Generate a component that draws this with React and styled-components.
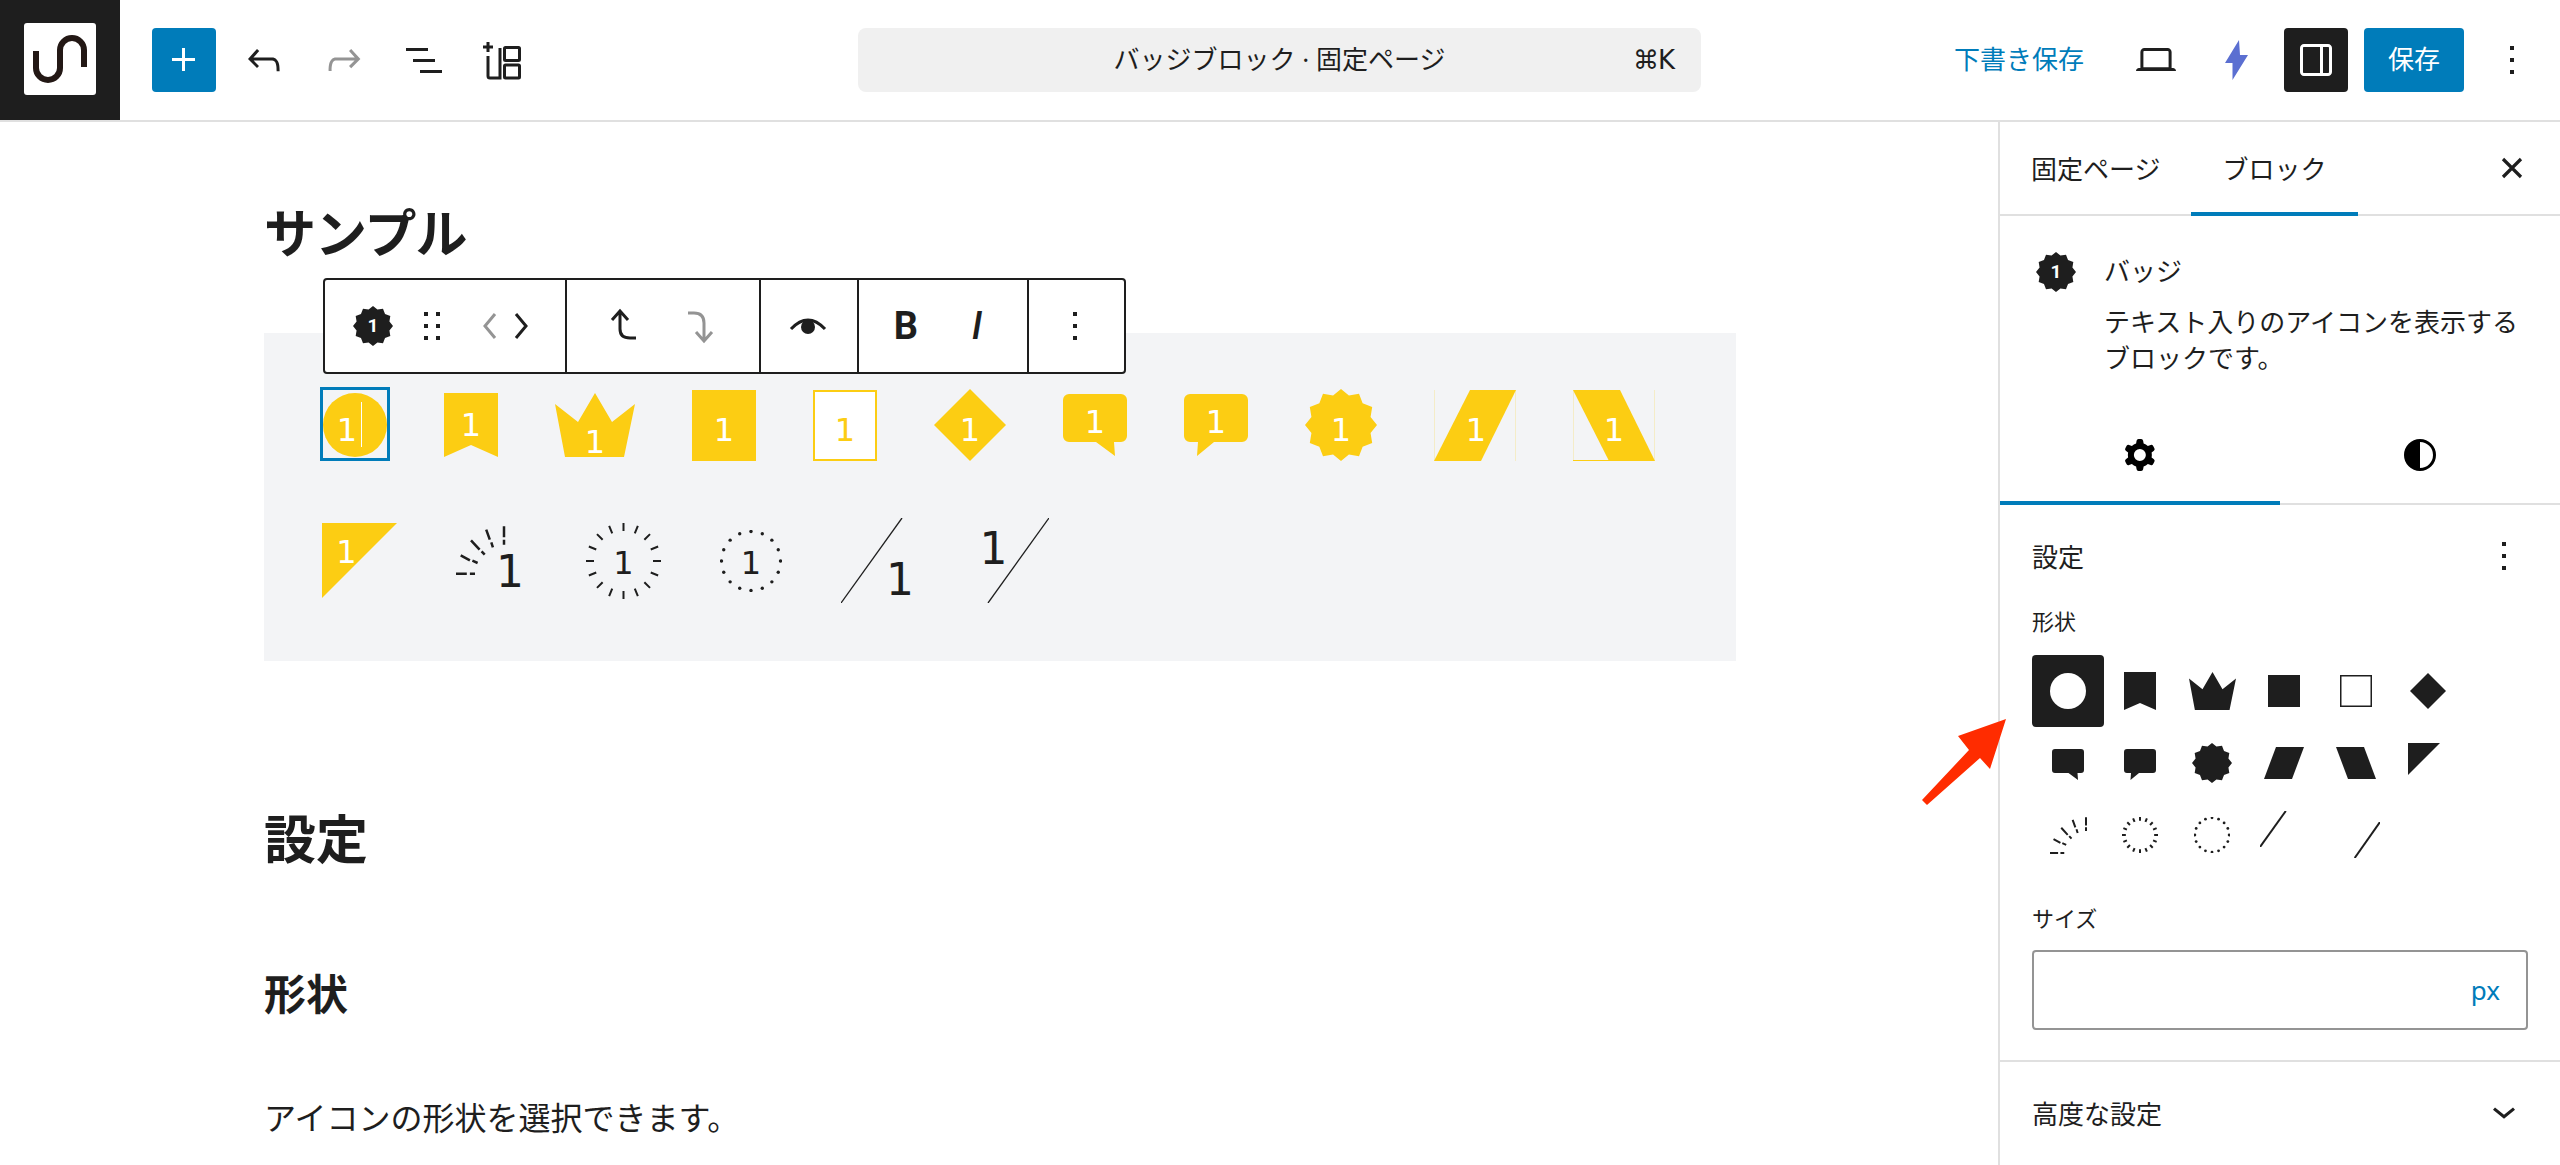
import styled, { createGlobalStyle } from "styled-components";

const DARK = "#1e1e1e";
const BLUE = "#007cba";
const LINE = "#e0e0e0";
const YELLOW = "#fccd13";
const GREY = "#949494";

const GlobalStyle = createGlobalStyle`
    html, body {
        margin: 0;
        height: 100%;
        overflow: hidden;
        background: #fff;
    }

    body {
        color: ${DARK};
        font-family: "Noto Sans CJK JP", "Noto Sans", "DejaVu Sans", sans-serif;
        font-size: 26px;
    }

    * {
        box-sizing: border-box;
    }
`;

function burstPoints(size, tips = 12, inner = 0.85) {
    const r = size / 2;
    const points = [];
    for (let i = 0; i < tips * 2; i++) {
        const radius = i % 2 === 0 ? r : r * inner;
        const angle = (Math.PI * i) / tips - Math.PI / 2;
        points.push(`${(r + radius * Math.cos(angle)).toFixed(2)},${(r + radius * Math.sin(angle)).toFixed(2)}`);
    }
    return points.join(" ");
}

function radialTicks(w, h) {
    const cx = w / 2;
    const cy = h / 2;
    let d = "";
    for (let i = 0; i < 16; i++) {
        const angle = (Math.PI * i) / 8;
        const x1 = cx + (cx - 8) * Math.cos(angle);
        const y1 = cy + (cy - 8) * Math.sin(angle);
        const x2 = cx + cx * Math.cos(angle);
        const y2 = cy + cy * Math.sin(angle);
        d += `M${x1.toFixed(2)} ${y1.toFixed(2)}L${x2.toFixed(2)} ${y2.toFixed(2)}`;
    }
    return d;
}

const DOTS = Array.from({ length: 16 }, (_, i) => {
    const angle = (Math.PI * i) / 8;
    return [31 + 29.5 * Math.cos(angle), 31 + 29.5 * Math.sin(angle)];
});

const SUN_RAYS =
    "M48 .3V11.3M48 13.7V18.7M30.2 3.7L33.8 13.7M35.3 16.3L36.9 21.3M15 14.3L23.6 23.7M25.6 25.3L28.7 28.7M4.7 29.3L13.9 34.3M16.4 34.7L21.6 37M0 47.7H10.8M13.9 47.7H19";

// natural size (the yellow badge) and drawing of every shape
const SHAPES = {
    circle: { w: 64, h: 64, draw: (c) => <circle cx="32" cy="32" r="32" fill={c} /> },
    bookmark: { w: 54, h: 64, draw: (c) => <polygon points="0,0 54,0 54,64 27,52 0,64" fill={c} /> },
    crown: { w: 80, h: 64, draw: (c) => <polygon points="0,11 23,29 40,0 57,29 80,11 69,64 10,64" fill={c} /> },
    square: { w: 64, h: 71, draw: (c) => <rect width="64" height="71" fill={c} /> },
    outline: {
        w: 64,
        h: 71,
        draw: (c) => <rect x="1" y="1" width="62" height="69" fill="#fff" stroke={c} strokeWidth="2" vectorEffect="non-scaling-stroke" />,
    },
    diamond: { w: 72, h: 72, draw: (c) => <polygon points="36,0 72,36 36,72 0,36" fill={c} /> },
    speechRight: {
        w: 64,
        h: 62,
        draw: (c) => <path d="M6 0H58a6 6 0 0 1 6 6V42a6 6 0 0 1-6 6H51L52 62L33 48H6a6 6 0 0 1-6-6V6a6 6 0 0 1 6-6Z" fill={c} />,
    },
    speechLeft: {
        w: 64,
        h: 62,
        draw: (c) => <path d="M6 0H58a6 6 0 0 1 6 6V42a6 6 0 0 1-6 6H30L13 62L14 48H6a6 6 0 0 1-6-6V6a6 6 0 0 1 6-6Z" fill={c} />,
    },
    burst: { w: 72, h: 72, draw: (c) => <polygon points={burstPoints(72)} fill={c} /> },
    slantRight: {
        w: 82,
        h: 71,
        draw: (c) => (
            <>
                <polygon points="36,0 82,0 47,71 0,71" fill={c} />
                <path d="M.5 0V71M81.5 0V71" stroke={c} strokeOpacity=".2" />
            </>
        ),
    },
    slantLeft: {
        w: 82,
        h: 71,
        draw: (c) => (
            <>
                <polygon points="0,0 47,0 82,71 36,71" fill={c} />
                <path d="M.5 0V71M81.5 0V71" stroke={c} strokeOpacity=".2" />
                <path d="M0 70.5H36" stroke={c} />
            </>
        ),
    },
    tileSlantRight: { w: 40, h: 32, draw: (c) => <polygon points="12,0 40,0 28,32 0,32" fill={c} /> },
    tileSlantLeft: { w: 40, h: 32, draw: (c) => <polygon points="0,0 28,0 40,32 12,32" fill={c} /> },
    triangle: { w: 75, h: 75, draw: (c) => <polygon points="0,0 75,0 0,75" fill={c} /> },
    sun: {
        w: 64,
        h: 69,
        draw: (c, stroke = 2.5) => <path d={SUN_RAYS} stroke={c} strokeWidth={stroke} vectorEffect="non-scaling-stroke" fill="none" />,
    },
    ticks: {
        w: 75,
        h: 76,
        draw: (c, stroke = 2) => <path d={radialTicks(75, 76)} stroke={c} strokeWidth={stroke} vectorEffect="non-scaling-stroke" fill="none" />,
    },
    dots: {
        w: 62,
        h: 62,
        draw: (c, stroke = 1.7) => (
            <>
                {DOTS.map(([x, y], i) => (
                    <circle key={i} cx={x} cy={y} r={stroke} fill={c} />
                ))}
            </>
        ),
    },
    lineBottom: {
        w: 78,
        h: 85,
        draw: (c, stroke = 1.3) => <path d="M0 85L61 0" stroke={c} strokeWidth={stroke} vectorEffect="non-scaling-stroke" fill="none" />,
    },
    lineTop: {
        w: 65,
        h: 85,
        draw: (c, stroke = 1.3) => <path d="M4 85L65 0" stroke={c} strokeWidth={stroke} vectorEffect="non-scaling-stroke" fill="none" />,
    },
};

function Shape({ name, color, width, height, stroke }) {
    const shape = SHAPES[name];
    return (
        <svg width={width ?? shape.w} height={height ?? shape.h} viewBox={`0 0 ${shape.w} ${shape.h}`} preserveAspectRatio="none">
            {shape.draw(color, stroke)}
        </svg>
    );
}

function WpIcon({ d, size = 48, color = "currentColor", evenOdd }) {
    return (
        <IconSvg width={size} height={size} viewBox="0 0 24 24" fill={color}>
            <path d={d} fillRule={evenOdd ? "evenodd" : undefined} clipRule={evenOdd ? "evenodd" : undefined} />
        </IconSvg>
    );
}

const ICONS = {
    plus: "M11 12.5V17.5H12.5V12.5H17.5V11H12.5V6H11V11H6V12.5H11Z",
    undo: "M18.3 11.7c-.6-.6-1.4-.9-2.3-.9H6.7l2.9-3.3-1.1-1-4.5 5L8.5 16l1-1-2.7-2.7H16c.5 0 .9.2 1.3.5 1 1 1 3.4 1 4.5v.3h1.5v-.2c0-1.5 0-4.3-1.5-5.7z",
    redo: "M15.6 6.5l-1.1 1 2.9 3.3H8c-.9 0-1.7.3-2.3.9-1.4 1.5-1.4 4.2-1.4 5.6v.2h1.5v-.3c0-1.1 0-3.5 1-4.5.3-.3.7-.5 1.3-.5h9.2L14.5 15l1.1 1.1 4.6-4.6-4.6-5z",
    list: "M3 6h11v1.5H3V6zm3.5 5.5h11V13h-11v-1.5zM21 17H10v1.5h11V17z",
    more: "M13 19h-2v-2h2v2zm0-6h-2v-2h2v2zm0-6h-2V5h2v2z",
    laptop: "M20.5 16h-.7V8c0-1.1-.9-2-2-2H6.2c-1.1 0-2 .9-2 2v8h-.7c-.8 0-1.5.7-1.5 1.5h20c0-.8-.7-1.5-1.5-1.5zM5.7 8c0-.3.2-.5.5-.5h11.6c.3 0 .5.2.5.5v7.6H5.7V8z",
    drawer: "M18 4H6c-1.1 0-2 .9-2 2v12c0 1.1.9 2 2 2h12c1.1 0 2-.9 2-2V6c0-1.1-.9-2-2-2zm-4 14.5H6c-.3 0-.5-.2-.5-.5V6c0-.3.2-.5.5-.5h8v13zm4.5-.5c0 .3-.2.5-.5.5h-2.5v-13H18c.3 0 .5.2.5.5v12z",
    drag: "M8 7h2V5H8v2zm0 6h2v-2H8v2zm0 6h2v-2H8v2zm6-14v2h2V5h-2zm0 8h2v-2h-2v2zm0 6h2v-2h-2v2z",
    chevronDown: "M17.5 10.9L12 15.4 6.5 10.9l1-1.2L12 13.4l4.5-3.7 1 1.2z",
    cog: "M10.289 4.836A1 1 0 0111.275 4h1.306a1 1 0 01.987.836l.244 1.466c.787.26 1.503.679 2.108 1.218l1.393-.522a1 1 0 011.216.437l.653 1.13a1 1 0 01-.23 1.273l-1.148.944a6.025 6.025 0 010 2.435l1.149.946a1 1 0 01.23 1.272l-.653 1.13a1 1 0 01-1.216.437l-1.394-.522c-.605.54-1.32.958-2.108 1.218l-.244 1.466a1 1 0 01-.987.836h-1.306a1 1 0 01-.986-.836l-.244-1.466a5.995 5.995 0 01-2.108-1.218l-1.394.522a1 1 0 01-1.217-.436l-.653-1.131a1 1 0 01.23-1.272l1.149-.946a6.026 6.026 0 010-2.435l-1.148-.944a1 1 0 01-.23-1.272l.653-1.131a1 1 0 011.217-.437l1.393.522a5.994 5.994 0 012.108-1.218l.244-1.466zM14.929 12a3 3 0 11-6 0 3 3 0 016 0z",
};

function Logo() {
    return (
        <svg width="120" height="120" viewBox="0 0 120 120">
            <rect x="24" y="23" width="72" height="72" rx="3" fill="#fff" />
            <path d="M36 51V68a12 12 0 0 0 24 0V50a12 12 0 0 1 24 0V67" fill="none" stroke="#231815" strokeWidth="6" />
        </svg>
    );
}

function BlockInserterIcon() {
    return (
        <svg width="48" height="48" viewBox="0 0 48 48" fill="none" stroke={DARK} strokeWidth="3">
            <path d="M5 11H15M10 6V16" />
            <path d="M10 20V40a2 2 0 0 0 2 2H22V12" />
            <rect x="26.5" y="11.5" width="15" height="13" rx="1" />
            <rect x="26.5" y="29" width="15" height="13" rx="1" />
        </svg>
    );
}

function BoltIcon() {
    return (
        <svg width="23" height="40" viewBox="0 0 23 40">
            <polygon points="14,0 0,23 7.5,23 7.5,40 23,15 15,15" fill="#5b6fd1" />
        </svg>
    );
}

function CloseIcon() {
    return (
        <svg width="48" height="48" viewBox="0 0 48 48" fill="none" stroke={DARK} strokeWidth="3.2">
            <path d="M15 15L33 33M33 15L15 33" />
        </svg>
    );
}

function ChevronIcon({ left, color }) {
    return (
        <svg width="30" height="48" viewBox="0 0 30 48" fill="none" stroke={color} strokeWidth="3">
            <path d={left ? "M20 12L10 24L20 36" : "M10 12L20 24L10 36"} />
        </svg>
    );
}

function MoveUpIcon() {
    return (
        <svg width="48" height="48" viewBox="0 0 48 48" fill="none" stroke={DARK} strokeWidth="3">
            <path d="M12 18L20 9L28 18M20 9V27Q20 36 30 36H36" />
        </svg>
    );
}

function MoveDownIcon() {
    return (
        <svg width="48" height="48" viewBox="0 0 48 48" fill="none" stroke={GREY} strokeWidth="3">
            <path d="M12 11H18Q28 11 28 21V39M20 30L28 39L36 30" />
        </svg>
    );
}

function EyeIcon() {
    return (
        <svg width="48" height="48" viewBox="0 0 48 48">
            <path d="M7 27Q24 9 41 27" fill="none" stroke={DARK} strokeWidth="3" />
            <circle cx="24" cy="25" r="7" fill={DARK} />
        </svg>
    );
}

function ContrastIcon() {
    return (
        <svg width="48" height="48" viewBox="0 0 48 48">
            <circle cx="24" cy="24" r="14.5" fill="#fff" stroke="#000" strokeWidth="3" />
            <path d="M24 9.5a14.5 14.5 0 0 0 0 29Z" fill="#000" />
        </svg>
    );
}

function ArrowMark() {
    return (
        <ArrowLayer width="100" height="100" viewBox="1915 712 100 100">
            <polygon points="2006,719 1990,769 1980,758 1927,805 1922,800 1969,750 1958,736" fill="#ff2c00" />
        </ArrowLayer>
    );
}

function BlackBadge() {
    return (
        <BlackBadgeBox>
            <Shape name="burst" color={DARK} width={40} height={40} />
            <BlackDigit>1</BlackDigit>
        </BlackBadgeBox>
    );
}

const ROW_ONE = [
    { shape: "circle", dx: -8, dy: 5, selected: true },
    { shape: "bookmark", dy: 0 },
    { shape: "crown", dy: 17 },
    { shape: "square", dy: 5 },
    { shape: "outline", dy: 5, yellow: true },
    { shape: "diamond", dy: 5 },
    { shape: "speechRight", dy: -3 },
    { shape: "speechLeft", dy: -3 },
    { shape: "burst", dy: 5 },
    { shape: "slantRight", dy: 5, dx: 1 },
    { shape: "slantLeft", dy: 5 },
];

const ROW_TWO = [
    { shape: "triangle", dx: -13, dy: -9, ml: -1 },
    { shape: "sun", dx: 22, dy: 11, dark: true, big: true },
    { shape: "ticks", dy: 2, dark: true, ml: 7 },
    { shape: "dots", dy: 2, dark: true },
    { shape: "lineBottom", dx: 20, dy: 19, dark: true, big: true },
    { shape: "lineTop", dx: -23, dy: -12, dark: true, big: true, ml: 6 },
];

const TILES = [
    { shape: "circle", w: 36, h: 36, selected: true },
    { shape: "bookmark", w: 32, h: 38 },
    { shape: "crown", w: 47, h: 38 },
    { shape: "square", w: 32, h: 32 },
    { shape: "outline", w: 32, h: 32 },
    { shape: "diamond", w: 36, h: 36 },
    { shape: "speechRight", w: 32, h: 31, dy: 1 },
    { shape: "speechLeft", w: 32, h: 31, dy: 1 },
    { shape: "burst", w: 40, h: 40 },
    { shape: "tileSlantRight", w: 40, h: 32 },
    { shape: "tileSlantLeft", w: 40, h: 32 },
    { shape: "triangle", w: 32, h: 32, dx: -4, dy: -4 },
    { shape: "sun", w: 48, h: 52, dx: 6, dy: 8, stroke: 2 },
    { shape: "ticks", w: 36, h: 36, stroke: 2 },
    { shape: "dots", w: 36, h: 36, stroke: 2.4 },
    { shape: "lineBottom", w: 33, h: 36, dx: -8, dy: -6, stroke: 2 },
    { shape: "lineTop", w: 27, h: 36, dx: 10, dy: 5, stroke: 2 },
];

function SampleBadge({ item }) {
    const natural = SHAPES[item.shape];
    const color = item.dark ? DARK : YELLOW;
    return (
        <Badge $w={natural.w} $h={natural.h} $ml={item.ml ?? 0} $selected={item.selected}>
            <Shape name={item.shape} color={color} />
            <Digit $dx={item.dx ?? 0} $dy={item.dy ?? 0} $big={item.big} $color={item.dark ? DARK : item.yellow ? YELLOW : "#fff"}>
                1
            </Digit>
            {item.selected && <Caret />}
        </Badge>
    );
}

export default function App() {
    return (
        <Page>
            <GlobalStyle />
            <Header>
                <HeaderLeft>
                    <LogoBox>
                        <Logo />
                    </LogoBox>
                    <InserterButton>
                        <WpIcon d={ICONS.plus} color="#fff" />
                    </InserterButton>
                    <IconButton>
                        <WpIcon d={ICONS.undo} />
                    </IconButton>
                    <IconButton $muted>
                        <WpIcon d={ICONS.redo} />
                    </IconButton>
                    <IconButton>
                        <WpIcon d={ICONS.list} />
                    </IconButton>
                    <IconButton $ml={-2}>
                        <BlockInserterIcon />
                    </IconButton>
                </HeaderLeft>
                <CommandBar>
                    <span />
                    <CommandTitle>バッジブロック · 固定ページ</CommandTitle>
                    <Shortcut>⌘K</Shortcut>
                </CommandBar>
                <HeaderRight>
                    <DraftLink>下書き保存</DraftLink>
                    <IconButton $ml={48}>
                        <WpIcon d={ICONS.laptop} />
                    </IconButton>
                    <IconButton $ml={32}>
                        <BoltIcon />
                    </IconButton>
                    <SidebarToggle $ml={24}>
                        <WpIcon d={ICONS.drawer} color="#fff" />
                    </SidebarToggle>
                    <SaveButton>保存</SaveButton>
                    <IconButton $ml={24}>
                        <WpIcon d={ICONS.more} />
                    </IconButton>
                </HeaderRight>
            </Header>

            <Main>
                <Editor>
                    <PageHeading $top={0} $tight>
                        サンプル
                    </PageHeading>
                    <Group>
                        <BlockToolbar>
                            <ToolSection $w={242} $pad={24}>
                                <ToolIcon $w={48}>
                                    <BlackBadge />
                                </ToolIcon>
                                <ToolIcon $w={48} $ml={11}>
                                    <WpIcon d={ICONS.drag} />
                                </ToolIcon>
                                <ToolIcon $w={30} $ml={19}>
                                    <ChevronIcon left color={GREY} />
                                </ToolIcon>
                                <ToolIcon $w={30} $ml={1}>
                                    <ChevronIcon color={DARK} />
                                </ToolIcon>
                            </ToolSection>
                            <ToolSection $w={194} $pad={33}>
                                <ToolIcon $w={48}>
                                    <MoveUpIcon />
                                </ToolIcon>
                                <ToolIcon $w={48} $ml={28}>
                                    <MoveDownIcon />
                                </ToolIcon>
                            </ToolSection>
                            <ToolSection $w={98} $pad={23}>
                                <ToolIcon $w={48}>
                                    <EyeIcon />
                                </ToolIcon>
                            </ToolSection>
                            <ToolSection $w={170} $pad={23}>
                                <FormatLetter>B</FormatLetter>
                                <FormatLetter $italic $ml={23}>
                                    I
                                </FormatLetter>
                            </ToolSection>
                            <ToolSection $last $pad={22}>
                                <ToolIcon $w={48}>
                                    <WpIcon d={ICONS.more} />
                                </ToolIcon>
                            </ToolSection>
                        </BlockToolbar>
                        <BadgeRow $gap={57} $h={74}>
                            {ROW_ONE.map((item) => (
                                <SampleBadge key={item.shape} item={item} />
                            ))}
                        </BadgeRow>
                        <BadgeRow $gap={59} $h={85} $top={56}>
                            {ROW_TWO.map((item) => (
                                <SampleBadge key={item.shape} item={item} />
                            ))}
                        </BadgeRow>
                    </Group>
                    <PageHeading $top={140}>設定</PageHeading>
                    <SubHeading>形状</SubHeading>
                    <Paragraph>アイコンの形状を選択できます。</Paragraph>
                </Editor>

                <Sidebar>
                    <SidebarTabs>
                        <SidebarTab>固定ページ</SidebarTab>
                        <SidebarTab $active>ブロック</SidebarTab>
                        <CloseButton>
                            <CloseIcon />
                        </CloseButton>
                    </SidebarTabs>

                    <BlockCard>
                        <CardIcon>
                            <BlackBadge />
                        </CardIcon>
                        <CardBody>
                            <CardTitle>バッジ</CardTitle>
                            <CardText>テキスト入りのアイコンを表示するブロックです。</CardText>
                        </CardBody>
                    </BlockCard>

                    <InspectorTabs>
                        <InspectorTab $active>
                            <WpIcon d={ICONS.cog} color="#000" evenOdd />
                        </InspectorTab>
                        <InspectorTab>
                            <ContrastIcon />
                        </InspectorTab>
                    </InspectorTabs>

                    <Panel>
                        <PanelHead>
                            <span>設定</span>
                            <IconButton>
                                <WpIcon d={ICONS.more} />
                            </IconButton>
                        </PanelHead>
                        <FieldLabel $top={31} $after={19}>
                            形状
                        </FieldLabel>
                        <TileGrid>
                            {TILES.map((tile) => (
                                <Tile key={tile.shape} $selected={tile.selected} $dx={tile.dx ?? 0} $dy={tile.dy ?? 0}>
                                    <Shape name={tile.shape} color={tile.selected ? "#fff" : DARK} width={tile.w} height={tile.h} stroke={tile.stroke} />
                                </Tile>
                            ))}
                        </TileGrid>
                        <FieldLabel $top={30}>サイズ</FieldLabel>
                        <SizeInput>
                            <Unit>px</Unit>
                        </SizeInput>
                    </Panel>

                    <AdvancedRow>
                        <span>高度な設定</span>
                        <WpIcon d={ICONS.chevronDown} />
                    </AdvancedRow>
                </Sidebar>
            </Main>
            <ArrowMark />
        </Page>
    );
}

const IconSvg = styled.svg`
    flex: none;
`;

const Page = styled.div`
    position: relative;
    width: 2560px;
    height: 1165px;
    overflow: hidden;
`;

const Header = styled.header`
    display: grid;
    grid-template-columns: 858px 843px 1fr;
    align-items: center;
    height: 122px;
    border-bottom: 2px solid ${LINE};
`;

const HeaderLeft = styled.div`
    display: flex;
    align-items: center;
    gap: 32px;
`;

const LogoBox = styled.div`
    display: flex;
    width: 120px;
    height: 120px;
    background: ${DARK};
`;

const InserterButton = styled.div`
    display: flex;
    align-items: center;
    justify-content: center;
    width: 64px;
    height: 64px;
    border-radius: 4px;
    background: ${BLUE};
    margin-right: -8px;
`;

const IconButton = styled.div`
    display: flex;
    align-items: center;
    justify-content: center;
    width: 48px;
    height: 48px;
    margin-left: ${(p) => p.$ml ?? 0}px;
    color: ${(p) => (p.$muted ? GREY : DARK)};
`;

const CommandBar = styled.div`
    display: grid;
    grid-template-columns: 1fr auto 1fr;
    align-items: center;
    height: 64px;
    padding: 0 27px;
    border-radius: 8px;
    background: #f0f0f0;
`;

const CommandTitle = styled.span`
    font-family: "Noto Sans", "Noto Sans CJK JP", sans-serif;
    font-size: 26px;
    line-height: 36px;
    padding-bottom: 2px;
`;

const Shortcut = styled.span`
    justify-self: end;
    font-size: 26px;
    font-family: "DejaVu Sans", "Noto Sans", sans-serif;
    letter-spacing: -1px;
`;

const HeaderRight = styled.div`
    display: flex;
    align-items: center;
    justify-content: flex-end;
    padding-right: 24px;
`;

const DraftLink = styled.span`
    color: ${BLUE};
    font-size: 26px;
    padding-bottom: 5px;
`;

const SidebarToggle = styled.div`
    display: flex;
    align-items: center;
    justify-content: center;
    width: 64px;
    height: 64px;
    margin-left: ${(p) => p.$ml}px;
    border-radius: 4px;
    background: ${DARK};
`;

const SaveButton = styled.div`
    display: flex;
    align-items: center;
    justify-content: center;
    width: 100px;
    height: 64px;
    margin-left: 16px;
    padding-bottom: 5px;
    border-radius: 4px;
    background: ${BLUE};
    color: #fff;
    font-size: 26px;
`;

const Main = styled.div`
    display: flex;
    height: 1043px;
`;

const Editor = styled.main`
    flex: 1;
    padding: 73px 0 0 264px;
    overflow: hidden;
`;

const PageHeading = styled.h1`
    margin: ${(p) => p.$top}px 0 0;
    font-size: 52px;
    line-height: 72px;
    font-weight: 700;
    letter-spacing: ${(p) => (p.$tight ? "-1px" : "0")};
`;

const SubHeading = styled.h2`
    margin: 89px 0 0;
    font-size: 42px;
    line-height: 60px;
    font-weight: 700;
`;

const Paragraph = styled.p`
    margin: 66px 0 0;
    font-size: 32px;
    line-height: 56px;
`;

const Group = styled.section`
    position: relative;
    width: 1472px;
    height: 328px;
    margin-top: 66px;
    padding: 55px 0 0 59px;
    background: #f3f4f6;
`;

const BlockToolbar = styled.div`
    position: absolute;
    left: 59px;
    top: -55px;
    display: flex;
    width: 803px;
    height: 96px;
    border: 2px solid ${DARK};
    border-radius: 4px;
    background: #fff;
`;

const ToolSection = styled.div`
    display: flex;
    align-items: center;
    flex: ${(p) => (p.$last ? 1 : "none")};
    width: ${(p) => (p.$w ? `${p.$w}px` : "auto")};
    padding-left: ${(p) => p.$pad}px;
    border-right: ${(p) => (p.$last ? "none" : `2px solid ${DARK}`)};
`;

const ToolIcon = styled.div`
    display: flex;
    align-items: center;
    justify-content: center;
    width: ${(p) => p.$w}px;
    height: 48px;
    margin-left: ${(p) => p.$ml ?? 0}px;
`;

const FormatLetter = styled.span`
    display: flex;
    justify-content: center;
    width: 48px;
    margin-left: ${(p) => p.$ml ?? 0}px;
    font-family: "Roboto", "Noto Sans", sans-serif;
    font-size: 38px;
    line-height: 48px;
    font-weight: ${(p) => (p.$italic ? 500 : 700)};
    font-style: ${(p) => (p.$italic ? "italic" : "normal")};
`;

const BlackBadgeBox = styled.div`
    position: relative;
    display: flex;
    align-items: center;
    justify-content: center;
    width: 40px;
    height: 40px;
`;

const BlackDigit = styled.span`
    position: absolute;
    color: #fff;
    font-family: "Roboto", "Noto Sans", sans-serif;
    font-size: 19px;
    font-weight: 700;
    line-height: 40px;
`;

const BadgeRow = styled.div`
    display: flex;
    align-items: center;
    gap: ${(p) => p.$gap}px;
    height: ${(p) => p.$h}px;
    margin-top: ${(p) => p.$top ?? 0}px;
`;

const Badge = styled.div`
    position: relative;
    display: flex;
    align-items: center;
    justify-content: center;
    flex: none;
    width: ${(p) => p.$w}px;
    height: ${(p) => p.$h}px;
    margin-left: ${(p) => p.$ml}px;

    svg {
        position: absolute;
        left: 0;
        top: 0;
    }

    ${(p) =>
        p.$selected &&
        `
        &::after {
            content: "";
            position: absolute;
            inset: -6px -3px -4px -3px;
            border: 3px solid ${BLUE};
        }
    `}
`;

const Digit = styled.span`
    position: relative;
    left: ${(p) => p.$dx}px;
    top: ${(p) => p.$dy}px;
    color: ${(p) => p.$color};
    font-family: "DejaVu Sans", "Liberation Mono", sans-serif;
    font-weight: 400;
    font-size: ${(p) => (p.$big ? 44 : 32)}px;
    line-height: 1;
`;

const Caret = styled.span`
    position: absolute;
    left: 38px;
    top: 9px;
    width: 1px;
    height: 45px;
    background: #fff;
`;

const Sidebar = styled.aside`
    flex: none;
    width: 562px;
    border-left: 2px solid ${LINE};
    overflow: hidden;
`;

const SidebarTabs = styled.div`
    display: flex;
    align-items: stretch;
    height: 94px;
    border-bottom: 2px solid ${LINE};
`;

const SidebarTab = styled.div`
    display: flex;
    align-items: center;
    padding: 0 31px;
    margin-bottom: -2px;
    border-bottom: 4px solid ${(p) => (p.$active ? BLUE : "transparent")};
    font-size: 26px;
`;

const CloseButton = styled.div`
    display: flex;
    align-items: center;
    margin: 0 24px 0 auto;
`;

const BlockCard = styled.div`
    display: flex;
    gap: 24px;
    padding: 38px 32px 35px;
`;

const CardIcon = styled.div`
    display: flex;
    align-items: center;
    justify-content: center;
    flex: none;
    width: 48px;
    height: 36px;
`;

const CardBody = styled.div`
    width: 424px;
`;

const CardTitle = styled.div`
    font-size: 26px;
    line-height: 36px;
    margin-top: -2px;
`;

const CardText = styled.p`
    margin: 15px 0 0;
    font-size: 26px;
    line-height: 36px;
`;

const InspectorTabs = styled.div`
    display: grid;
    grid-template-columns: 280px 280px;
    height: 95px;
    border-bottom: 2px solid ${LINE};
`;

const InspectorTab = styled.div`
    display: flex;
    align-items: center;
    justify-content: center;
    padding-bottom: 2px;
    margin-bottom: -2px;
    border-bottom: 4px solid ${(p) => (p.$active ? BLUE : "transparent")};
`;

const Panel = styled.section`
    padding: 32px 32px 30px;
    border-bottom: 2px solid ${LINE};
`;

const PanelHead = styled.div`
    display: flex;
    align-items: center;
    justify-content: space-between;
    height: 36px;
    margin-bottom: 2px;
    font-size: 26px;

    > div {
        position: relative;
        top: 1px;
    }
`;

const FieldLabel = styled.div`
    margin: ${(p) => p.$top}px 0 ${(p) => p.$after ?? 0}px;
    font-size: 22px;
    line-height: 32px;
`;

const TileGrid = styled.div`
    display: grid;
    grid-template-columns: repeat(6, 72px);
    grid-auto-rows: 72px;
`;

const Tile = styled.div`
    display: flex;
    align-items: center;
    justify-content: center;
    border-radius: 4px;
    background: ${(p) => (p.$selected ? DARK : "transparent")};

    svg {
        flex: none;
        translate: ${(p) => p.$dx}px ${(p) => p.$dy}px;
    }
`;

const SizeInput = styled.div`
    display: flex;
    align-items: center;
    justify-content: flex-end;
    height: 80px;
    margin-top: 17px;
    padding-right: 26px;
    border: 2px solid ${GREY};
    border-radius: 4px;
`;

const Unit = styled.span`
    color: ${BLUE};
    font-family: "Noto Sans", sans-serif;
    font-size: 26px;
`;

const AdvancedRow = styled.div`
    display: flex;
    align-items: center;
    justify-content: space-between;
    height: 104px;
    padding: 0 32px 4px;
    font-size: 26px;
`;

const ArrowLayer = styled.svg`
    position: absolute;
    left: 1915px;
    top: 712px;
`;
